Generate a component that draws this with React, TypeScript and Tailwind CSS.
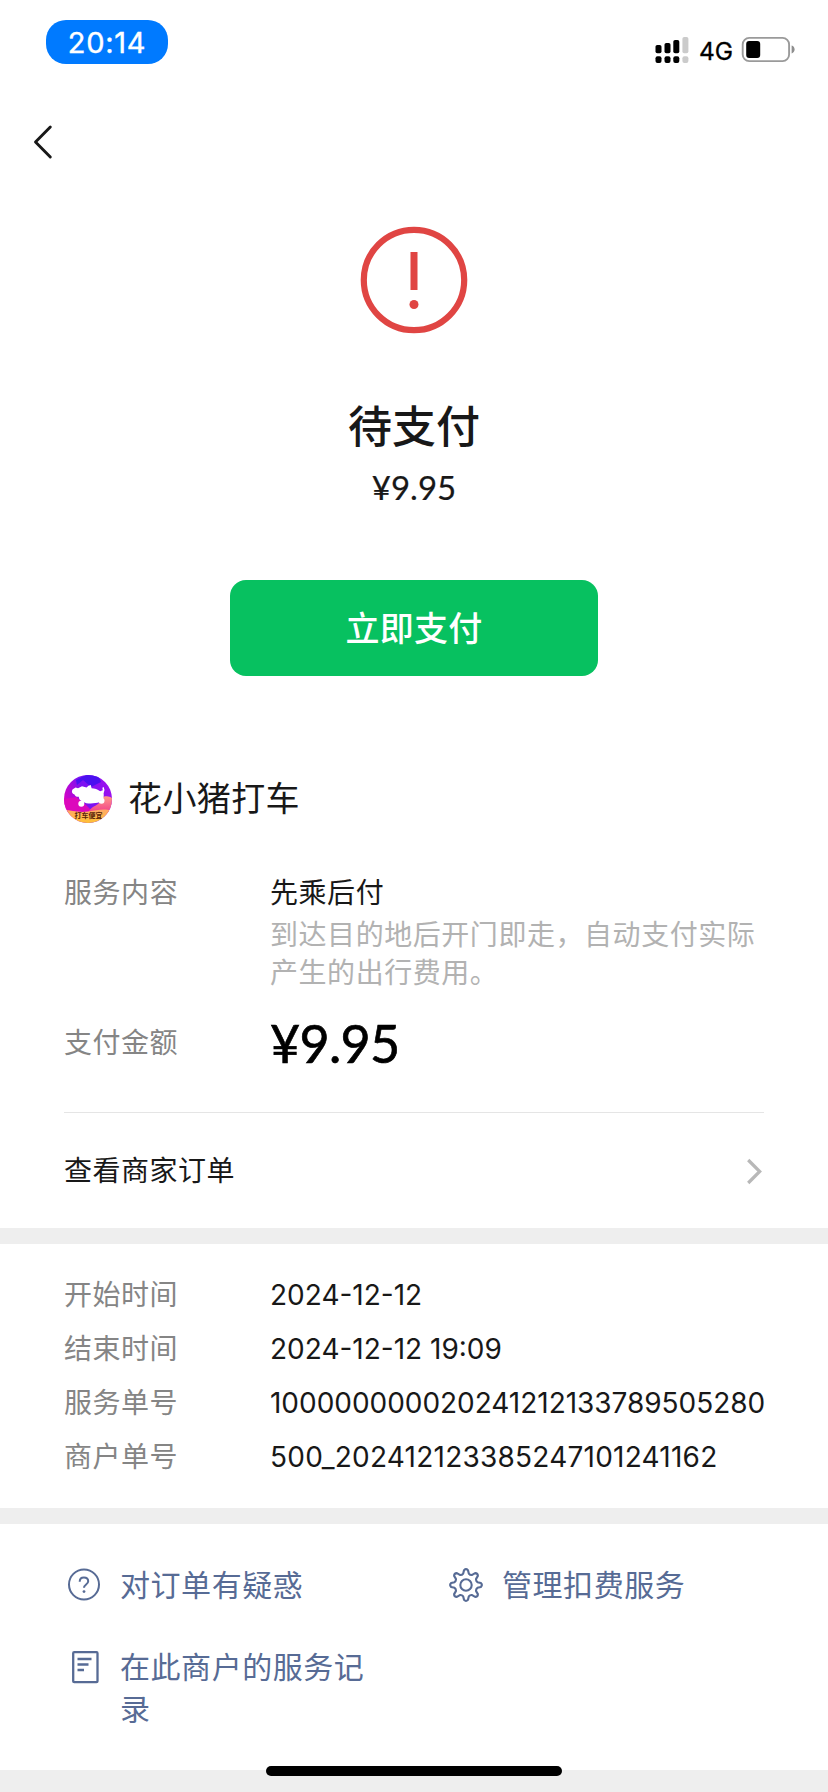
import type { ReactNode } from "react";

const cjk = "font-['Inter','Noto_Sans_CJK_SC',sans-serif]";

function StatusBar() {
  return (
    <header className="flex h-[84px] items-start justify-between pt-5 pr-[33px] pl-[46px]">
      <div className="flex h-11 w-[122px] items-center justify-center rounded-[20px] bg-[#007aff] text-[29px] leading-none tracking-[0.700px] text-white [-webkit-text-stroke:0.4px_white]">
        20:14
      </div>
      <div className="mt-[15px] flex items-center">
        <svg width="34" height="28" viewBox="0 0 34 28">
          <g fill="#000">
            <rect x="0.5" y="9" width="6" height="8.3" rx="1.8" />
            <rect x="9.5" y="7" width="6" height="10.3" rx="1.8" />
            <rect x="18.3" y="4" width="6" height="13.3" rx="1.8" />
            <rect x="0.5" y="20.2" width="6" height="6.8" rx="2" />
            <rect x="9.5" y="20.2" width="6" height="6.8" rx="2" />
            <rect x="18.3" y="20.2" width="6" height="6.8" rx="2" />
          </g>
          <g fill="#cbcbcb">
            <rect x="27.4" y="1" width="6" height="16.3" rx="1.8" />
            <rect x="27.4" y="20.2" width="6" height="6.8" rx="2" />
          </g>
        </svg>
        <span className="ml-2.5 w-[42px] pt-0.5 text-[24.500px] leading-7 text-black [-webkit-text-stroke:0.3px_black]">4G</span>
        <svg width="54" height="28" viewBox="0 0 54 28">
          <rect x="1.7" y="1.9" width="46.4" height="23.200" rx="6.5" fill="none" stroke="#9a9a9a" strokeWidth="1.9" />
          <rect x="5.2" y="5" width="14" height="17" rx="3" fill="#000" />
          <path d="M50.600 9.600c2 .6 3 2.200 3 3.900s-1 3.300-3 3.900z" fill="#8e8e8e" />
        </svg>
      </div>
    </header>
  );
}

function Merchant() {
  return (
    <div className="flex h-12 items-center">
      <svg width="48" height="48" viewBox="0 0 48 48">
        <defs>
          <clipPath id="logo">
            <circle cx="24" cy="24" r="24" />
          </clipPath>
          <linearGradient id="sky" x1="0" y1="0.6" x2="1" y2="0.2">
            <stop offset="0" stopColor="#e000c0" />
            <stop offset="0.45" stopColor="#7a12f2" />
            <stop offset="1" stopColor="#a010ee" />
          </linearGradient>
          <linearGradient id="hill" x1="0" y1="0" x2="0" y2="1">
            <stop offset="0" stopColor="#ff9a88" />
            <stop offset="1" stopColor="#f0308c" />
          </linearGradient>
          <linearGradient id="band" x1="0" y1="0" x2="0" y2="1">
            <stop offset="0" stopColor="#ffa868" />
            <stop offset="1" stopColor="#ffc234" />
          </linearGradient>
        </defs>
        <g clipPath="url(#logo)">
          <rect width="48" height="48" fill="url(#sky)" />
          <path d="M12 5L22 0h12l3 7-10 5-8-7-6 5z" fill="#4a10f0" />
          <path d="M0 24l12-2 10 8 10 10H0z" fill="#dc08bc" />
          <path d="M24 38c3-7 9-7 11-10 2-8 9-8 13-5v17H24z" fill="url(#hill)" />
          <path d="M0 35c8 0 14 3 24 1.500S40 33 48 36v12H0z" fill="url(#band)" />
          <path
            d="M8.500 14.500l3-2 2.500.8 4-2 4.500 1.200 2-1.700 2.300-.8.800 3.300c3 .3 6 1 8.500 3l2.700-1-.4-2.500 1.300-.7.800 3-.9 3.400c.6 3.500-.4 6.800-3.800 8.600-6 2-13.500 2-16.800-.4-3-.8-4.200-2.700-4.200-4.900-2.300.3-3.600-.7-4.300-2.300-2.500-.8-3.300-3-2-5z"
            fill="#fff"
          />
          <circle cx="17.300" cy="28.800" r="3" fill="#fff" />
          <circle cx="37.500" cy="25.800" r="3" fill="#fff" />
          <text x="24.500" y="42.800" textAnchor="middle" fontSize="7" fontWeight="700" fill="#5a2408" fontFamily="'Noto Sans CJK SC', sans-serif">
            打车便宜
          </text>
        </g>
      </svg>
      <span className="ml-4 text-[34px] leading-12 tracking-[0.400px] text-[#181818]">花小猪打车</span>
    </div>
  );
}

function Row({ label, children }: { label: string; children: ReactNode }) {
  return (
    <div className="flex h-[54px] items-center">
      <dt className="w-[206px] shrink-0 text-[28px] tracking-[0.500px] text-[#858585]">{label}</dt>
      <dd className="text-[28px] whitespace-nowrap text-[#181818]">{children}</dd>
    </div>
  );
}

function Action({ icon, children }: { icon: ReactNode; children: ReactNode }) {
  return (
    <div className="flex items-start text-[30px] leading-[42.500px] tracking-[0.550px] text-[#576b95]">
      <span className="mr-4 flex h-[42px] w-[40px] shrink-0 items-center justify-center">{icon}</span>
      <span>{children}</span>
    </div>
  );
}

const gear = (() => {
  const pts: string[] = [];
  const n = 8;
  const at = (r: number, a: number) => `${(18 + r * Math.sin(a)).toFixed(2)} ${(18 - r * Math.cos(a)).toFixed(2)}`;
  for (let i = 0; i < n; i++) {
    const a = (i * 2 * Math.PI) / n;
    pts.push(`${i ? "L" : "M"}${at(11.8, a - 0.24)}`);
    pts.push(`L${at(15, a - 0.13)}`);
    pts.push(`Q${at(16.8, a)} ${at(15, a + 0.13)}`);
    pts.push(`L${at(11.8, a + 0.24)}`);
    pts.push(`Q${at(10.6, a + Math.PI / n)} ${at(11.8, a + (2 * Math.PI) / n - 0.24)}`);
  }
  return pts.join("") + "Z";
})();

export default function App() {
  return (
    <div className={`flex h-[1792px] w-[828px] flex-col overflow-hidden bg-white ${cjk}`}>
      <StatusBar />
      <nav className="h-[142px] pt-10 pl-8">
        <svg width="22" height="36" viewBox="0 0 22 36">
          <path d="M18.300 3L3.500 18l14.800 15" fill="none" stroke="#181818" strokeWidth="2.900" strokeLinecap="round" strokeLinejoin="round" />
        </svg>
      </nav>

      <section className="flex h-[549px] flex-col items-center">
        <svg width="110" height="112" viewBox="0 0 110 112">
          <circle cx="55" cy="54" r="50.200" fill="none" stroke="#e04543" strokeWidth="6.200" />
          <rect x="51.500" y="26" width="7" height="38" fill="#e04543" />
          <circle cx="55" cy="78.500" r="4.500" fill="#e04543" />
        </svg>
        <h1 className="mt-[59px] text-[44px] leading-[60px] font-medium text-[#181818]">待支付</h1>
        <p className="mt-2 font-['Lato','Noto_Sans_CJK_SC',sans-serif] text-[33px] leading-[44px] text-[#181818] [-webkit-text-stroke:0.2px_#181818]">¥9.95</p>
        <button className="mt-[71px] h-24 w-[368px] rounded-2xl bg-[#07c160] text-[34px] font-medium tracking-[0.300px] text-white">立即支付</button>
      </section>

      <section className="h-[453px] px-16">
        <Merchant />
        <div className="mt-[47px] flex text-[28px] tracking-[0.550px]">
          <div className="w-[206px] leading-[46px] text-[#858585]">服务内容</div>
          <div className="w-[494px]">
            <p className="leading-[46px] text-[#181818]">先乘后付</p>
            <p className="leading-[38px] text-[#b2b2b2]">到达目的地后开门即走，自动支付实际产生的出行费用。</p>
          </div>
        </div>
        <div className="mt-[15px] flex h-[72px] items-center">
          <div className="w-[206px] text-[28px] tracking-[0.500px] text-[#858585]">支付金额</div>
          <div className="font-['Lato','Noto_Sans_CJK_SC',sans-serif] text-[52px] leading-[66px] tracking-[-0.700px] text-black [-webkit-text-stroke:0.7px_black]">¥9.95</div>
        </div>
        <div className="mt-[33px] h-px bg-[#e5e5e5]" />
        <div className="flex h-[115px] items-center justify-between">
          <span className="text-[28px] tracking-[0.500px] text-[#181818]">查看商家订单</span>
          <svg width="20" height="30" viewBox="0 0 20 30">
            <path d="M4.200 4l11.500 11.500L4.200 27" fill="none" stroke="#b8b8b8" strokeWidth="3.200" />
          </svg>
        </div>
      </section>

      <div className="h-4 shrink-0 bg-[#eeeeee]" />
      <dl className="h-[264px] px-16 pt-6">
        <Row label="开始时间">2024-12-12</Row>
        <Row label="结束时间">2024-12-12 19:09</Row>
        <Row label="服务单号">
          <span className="tracking-[-0.030px]">100000000020241212133789505280</span>
        </Row>
        <Row label="商户单号">
          <span className="tracking-[0.230px]">500_202412123385247101241162</span>
        </Row>
      </dl>
      <div className="h-4 shrink-0 bg-[#eeeeee]" />

      <section className="grid h-[246px] grid-cols-[382px_300px] content-start gap-y-[39px] pt-10 pl-16">
        <Action
          icon={
            <svg width="36" height="36" viewBox="0 0 36 36" fill="none" stroke="#576b95">
              <circle cx="18" cy="17.500" r="15" strokeWidth="2" />
              <path d="M13.700 14.700c0-2.700 1.700-4.300 4.200-4.300s4.300 1.500 4.300 3.800c0 3.200-4.200 3.300-4.200 6.600" strokeWidth="2" />
              <circle cx="18" cy="24.600" r="1.400" fill="#576b95" stroke="none" />
            </svg>
          }
        >
          对订单有疑惑
        </Action>
        <Action
          icon={
            <svg width="36" height="36" viewBox="0 0 36 36" fill="none" stroke="#576b95" strokeWidth="2.100" strokeLinejoin="round">
              <path d={gear} />
              <circle cx="18" cy="18" r="5.700" />
            </svg>
          }
        >
          管理扣费服务
        </Action>
        <div className="w-[310px]">
          <Action
            icon={
              <svg width="36" height="36" viewBox="0 0 36 36" fill="none" stroke="#576b95" strokeWidth="2.300">
                <rect x="7.200" y="3.200" width="24.300" height="30" rx="1" />
                <path d="M11.500 10h14M11.500 15.500h11M11.500 21h6.500" />
              </svg>
            }
          >
            在此商户的服务记录
          </Action>
        </div>
      </section>

      <footer className="flex h-[22px] shrink-0 items-start justify-center bg-[#eeeeee]">
        <div className="-mt-1 h-2.5 w-[296px] rounded-full bg-black" />
      </footer>
    </div>
  );
}
